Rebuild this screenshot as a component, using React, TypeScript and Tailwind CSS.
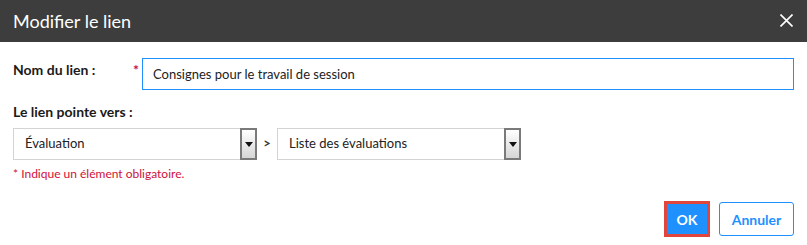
function SelectBox({ value }: { value: string }) {
  return (
    <div className="flex h-[32px] w-[244px] items-center border border-[#d4d4d4] bg-white">
      <span className="flex-1 pl-[11px] text-[13px] text-[#222]">{value}</span>
      <span className="mr-[-1px] flex h-[32px] w-[17px] items-center justify-center border-2 border-[#7a7a7a] bg-gradient-to-b from-white to-[#d6d6d6]">
        <svg width="8" height="5" viewBox="0 0 8 5">
          <path d="M0 0h8L4 5z" fill="#111" />
        </svg>
      </span>
    </div>
  )
}

export default function App() {
  return (
    <div className="h-[245px] w-[807px] bg-white font-['Lato',sans-serif] text-[#1a1a1a]">
      {/* Header */}
      <div className="flex h-[42px] items-center justify-between bg-[#3d3d3d] pl-[13px] pr-[14px]">
        <h1 className="text-[18px] text-white">Modifier le lien</h1>
        <svg width="13" height="13" viewBox="0 0 13 13" className="mt-[-2px]">
          <path d="M0.5 0.5l12 12M12.5 0.5l-12 12" stroke="#fff" strokeWidth="1.6" />
        </svg>
      </div>

      {/* Body */}
      <div className="px-[13px] pt-[16px]">
        <div className="flex items-start">
          <label className="w-[120px] pt-[1px] text-[14px] font-bold">Nom du lien :</label>
          <span className="w-[9px] pt-[5px] text-[14px] leading-[14px] font-bold text-[#c8102e]">*</span>
          <input
            readOnly
            value="Consignes pour le travail de session"
            className="h-[32px] flex-1 border border-[#1e90ff] px-[10px] text-[13px] text-[#222] outline-none"
          />
        </div>

        <div className="mt-[11px] text-[14px] font-bold">Le lien pointe vers :</div>

        <div className="mt-[6px] flex items-center">
          <SelectBox value="Évaluation" />
          <span className="w-[20px] text-center text-[13px] font-bold text-[#333]">&gt;</span>
          <SelectBox value="Liste des évaluations" />
        </div>

        <div className="mt-[5px] text-[12px] text-[#d0103a]">* Indique un élément obligatoire.</div>

        <div className="mt-[18px] flex justify-end gap-[9px]">
          <button className="h-[36px] w-[46px] border-[3px] border-[#e0463c] bg-[#1e90ff] text-[14px] font-bold text-white">
            OK
          </button>
          <button className="mt-[1px] h-[34px] w-[75px] rounded-[3px] border border-[#1e90ff] bg-white text-[14px] font-bold text-[#1e90ff]">
            Annuler
          </button>
        </div>
      </div>
    </div>
  )
}
